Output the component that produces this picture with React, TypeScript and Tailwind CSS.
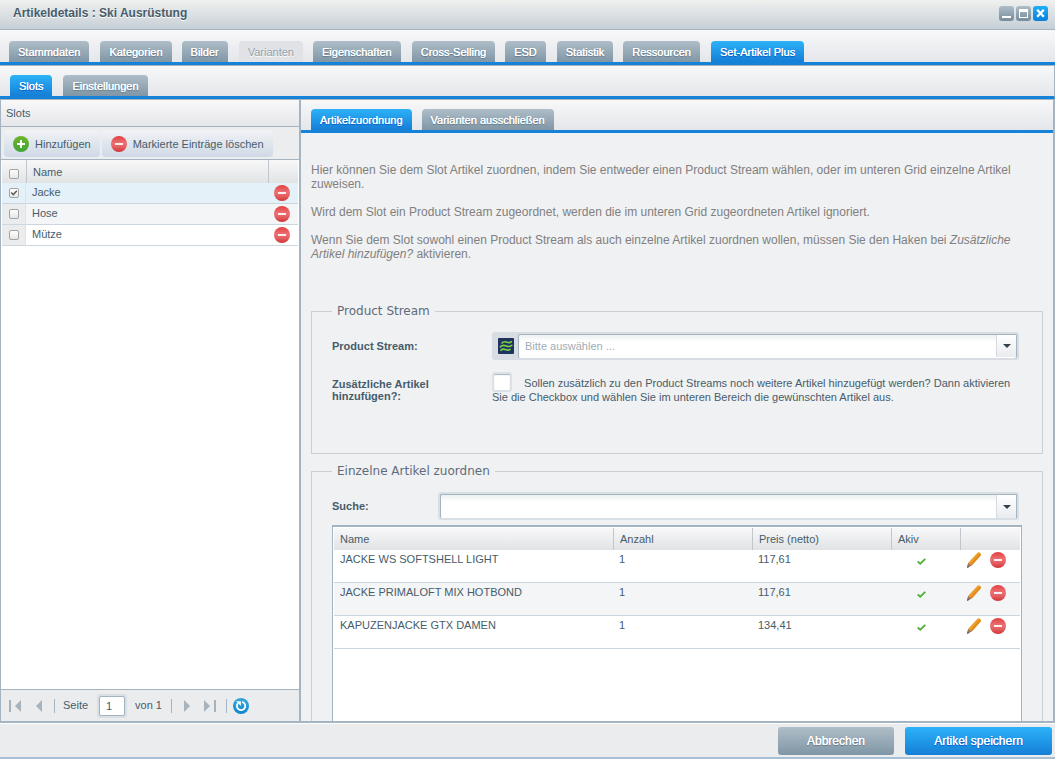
import { useState } from 'react';

type TabItem = { label: string; disabled?: boolean };

const mainTabs: TabItem[] = [
  { label: 'Stammdaten' },
  { label: 'Kategorien' },
  { label: 'Bilder' },
  { label: 'Varianten', disabled: true },
  { label: 'Eigenschaften' },
  { label: 'Cross-Selling' },
  { label: 'ESD' },
  { label: 'Statistik' },
  { label: 'Ressourcen' },
  { label: 'Set-Artikel Plus' },
];

const subTabs: TabItem[] = [{ label: 'Slots' }, { label: 'Einstellungen' }];

const slotTabs: TabItem[] = [{ label: 'Artikelzuordnung' }, { label: 'Varianten ausschließen' }];

const slots = [
  { name: 'Jacke', checked: true },
  { name: 'Hose', checked: false },
  { name: 'Mütze', checked: false },
];

const articles = [
  { name: 'JACKE WS SOFTSHELL LIGHT', amount: '1', price: '117,61' },
  { name: 'JACKE PRIMALOFT MIX HOTBOND', amount: '1', price: '117,61' },
  { name: 'KAPUZENJACKE GTX DAMEN', amount: '1', price: '134,41' },
];

function TabBar({ tabs, initial, className }: { tabs: TabItem[]; initial: string; className: string }) {
  const [active, setActive] = useState(initial);

  const look = (tab: TabItem) => {
    if (tab.disabled) return 'bg-[#e0e2e5] text-[#95a0ab] [text-shadow:0_1px_0_#fff]';
    if (tab.label === active) {
      return 'bg-linear-to-b from-[#2db2f8] to-[#157fd6] text-white [text-shadow:0_0_0_#fff,0_1px_1px_#0b4fc4]';
    }
    return 'bg-linear-to-b from-[#afbec8] to-[#8096a6] text-white [text-shadow:0_0_0_#fff,0_1px_1px_#5c7182]';
  };

  return (
    <div
      role="tablist"
      className={`flex shrink-0 items-end border-b-[3px] border-[#1682d8] bg-linear-to-b from-[#f8f8f9] to-[#e4e6ea] ${className}`}
    >
      {tabs.map((tab) => (
        <button
          key={tab.label}
          type="button"
          role="tab"
          aria-selected={tab.label === active}
          disabled={tab.disabled}
          onClick={() => setActive(tab.label)}
          className={`h-[21px] rounded-t-[4px] px-[9px] text-[11px] leading-[23px] whitespace-nowrap odd:mr-px ${look(tab)}`}
        >
          {tab.label}
        </button>
      ))}
    </div>
  );
}

function MinusIcon() {
  return (
    <svg width="16" height="16" viewBox="0 0 16 16" className="block">
      <defs>
        <linearGradient id="minus" x1="0" y1="0" x2="0" y2="1">
          <stop offset="0" stopColor="#e23f42" />
          <stop offset="0.45" stopColor="#ec7173" />
          <stop offset="0.7" stopColor="#e45d5f" />
          <stop offset="1" stopColor="#cf3438" />
        </linearGradient>
      </defs>
      <circle cx="8" cy="8" r="8" fill="url(#minus)" />
      <rect x="4" y="7" width="8" height="2" fill="#fbeeee" />
    </svg>
  );
}

function PlusIcon() {
  return (
    <svg width="16" height="16" viewBox="0 0 16 16" className="block">
      <defs>
        <linearGradient id="plus" x1="0" y1="0" x2="0" y2="1">
          <stop offset="0" stopColor="#6fb52c" />
          <stop offset="1" stopColor="#3fa535" />
        </linearGradient>
      </defs>
      <circle cx="8" cy="8" r="8" fill="url(#plus)" />
      <path d="M7 4h2v3h3v2H9v3H7V9H4V7h3z" fill="#fff" />
    </svg>
  );
}

function PencilIcon() {
  return (
    <svg width="14" height="16" viewBox="0 0 14 16" className="block">
      <path d="M10 1.3Q11.4-.3 13 .8q1.600 1 .5 2.900L5 13.200 1.200 10.800z" fill="#eda02f" />
      <path d="M11.800 2.200L3.200 12.100 5 13.200l8.500-9.500q.6-1-.1-2z" fill="#e18c20" />
      <path d="M1.200 10.800L5 13.200.3 16q-.5-1.500.9-5.200z" fill="#a3765c" />
      <path d="M.6 13.600l1.500 1.200L.3 16z" fill="#5c4440" />
    </svg>
  );
}

function CheckIcon() {
  return (
    <svg width="9" height="7" viewBox="0 0 9 7" className="block" aria-label="aktiv">
      <path d="M.7 3.500L3.200 5.700 8.300.9" fill="none" stroke="#52b03c" strokeWidth="1.900" />
    </svg>
  );
}

function StreamIcon() {
  return (
    <svg width="16" height="16" viewBox="0 0 16 16" className="block">
      <rect width="16" height="16" rx="1" fill="#1d3461" />
      <g fill="none" stroke="#7dd13f" strokeWidth="1.600" strokeLinecap="round">
        <path d="M4 5C5.500 3.200 7.200 3.600 9 4.300s3.200.5 4.400-.6" />
        <path d="M2.300 8.800C4.200 7 6.300 7.200 8.300 8s3.900.6 5.500-.6" />
        <path d="M3 12.300C4.500 10.600 6.300 11 8 11.700s2.900.5 4-.4" />
      </g>
    </svg>
  );
}

function RefreshIcon() {
  return (
    <svg width="16" height="16" viewBox="0 0 16 16" className="block">
      <defs>
        <linearGradient id="refresh" x1="0" y1="0" x2="0" y2="1">
          <stop offset="0" stopColor="#36a9dd" />
          <stop offset="1" stopColor="#0f86cc" />
        </linearGradient>
      </defs>
      <circle cx="8" cy="8" r="8" fill="url(#refresh)" />
      <path d="M9.200 3.900a4.200 4.200 0 1 1-4.400 1.400" fill="none" stroke="#fff" strokeWidth="1.800" />
      <path d="M3 3.200h4.900v4.700z" fill="#fff" />
    </svg>
  );
}

function ArrowIcon({ bar, flip }: { bar?: boolean; flip?: boolean }) {
  return (
    <svg
      width={bar ? 12 : 6}
      height="12"
      viewBox={bar ? '0 0 12 12' : '6 0 6 12'}
      className={`block ${flip ? '-scale-x-100' : ''}`}
      fill="#a6b3bd"
    >
      {bar && <rect width="2" height="12" />}
      <path d="M12 0v12L6 6z" />
    </svg>
  );
}

function DropArrow() {
  return (
    <svg width="8" height="4" viewBox="0 0 8 4" className="block" fill="#33414c">
      <path d="M0 0h8L4 4z" />
    </svg>
  );
}

function GridCheckbox({ label, checked = false }: { label: string; checked?: boolean }) {
  return (
    <span className="mx-auto grid w-[10px] place-items-center">
      <input
        type="checkbox"
        aria-label={label}
        defaultChecked={checked}
        className="peer col-start-1 row-start-1 block size-[10px] appearance-none rounded-[2px] border border-[#a3a3a3] bg-linear-to-b from-white to-[#e6e6e6]"
      />
      <svg
        width="8"
        height="8"
        viewBox="0 0 8 8"
        className="pointer-events-none invisible col-start-1 row-start-1 peer-checked:visible"
      >
        <path d="M1.300 3.500l2 2.300L6.800 1.800" fill="none" stroke="#555" strokeWidth="1.400" />
      </svg>
    </span>
  );
}

function Separator() {
  return <span className="h-[14px] w-px bg-[#a4b4c0]" />;
}

function SlotPanel() {
  const toolButton =
    'flex h-[27px] items-center gap-1.5 rounded-[4px] bg-linear-to-b from-[#f1f3f5] to-[#cfd9e6] px-[9px] leading-4';
  const cell = 'border-b border-[#ccd6de] p-0 pl-1.5';

  return (
    <section className="flex w-[301px] shrink-0 flex-col border-r-2 border-l border-r-[#a4b4c0] border-l-[#a4b4c0] bg-white">
      <h2 className="h-[27px] shrink-0 border-b border-[#a4b4c0] bg-linear-to-b from-[#f8f8f9] to-[#e6e7ea] pl-[5px] leading-[26px]">
        Slots
      </h2>

      <div className="flex h-[33px] shrink-0 gap-0.5 border-b border-[#a4b4c0] bg-[#ebedef] px-[3px] pt-[3px]">
        <button type="button" className={toolButton}>
          <PlusIcon />
          <span className="pt-px">Hinzufügen</span>
        </button>
        <button type="button" className={toolButton}>
          <MinusIcon />
          <span className="pt-px">Markierte Einträge löschen</span>
        </button>
      </div>

      <div className="flex-1 px-px">
        <table className="w-full table-fixed border-separate border-spacing-0 text-left">
          <colgroup>
            <col className="w-6" />
            <col />
            <col className="w-[30px]" />
          </colgroup>
          <thead>
            <tr className="h-[23px] bg-linear-to-b from-[#f8f8f9] to-[#e1e3e5]">
              <th className="p-0 pt-1 align-middle">
                <GridCheckbox label="Alle auswählen" />
              </th>
              <th className="border-l border-[#c0c6cb] p-0 pt-0.5 pl-1.5 font-normal">Name</th>
              <th className="border-l border-[#c0c6cb] p-0" />
            </tr>
          </thead>
          <tbody>
            {slots.map((slot) => (
              <tr key={slot.name} className="h-[21px] align-top even:bg-[#f4f5f7] has-checked:bg-[#e5f1f9]">
                <td className="border-r border-b border-r-[#dfe2e6] border-b-[#ccd6de] bg-[#ebecee] p-0 align-middle has-checked:bg-[#e5f1f9]">
                  <GridCheckbox label={slot.name} checked={slot.checked} />
                </td>
                <td className={`${cell} leading-[18px]`}>{slot.name}</td>
                <td className={`${cell} pt-0.5`}>
                  <button type="button" aria-label={`${slot.name} löschen`} className="block">
                    <MinusIcon />
                  </button>
                </td>
              </tr>
            ))}
          </tbody>
        </table>
      </div>

      <nav className="flex h-8 shrink-0 items-center border-t border-[#a4b4c0] bg-[#ebecee] pl-2">
        <button type="button" aria-label="Erste Seite">
          <ArrowIcon bar />
        </button>
        <button type="button" aria-label="Vorherige Seite" className="mr-3 ml-[15px]">
          <ArrowIcon />
        </button>
        <Separator />
        <label className="mr-2 ml-2 flex items-center gap-[9px]">
          Seite
          <span className="rounded-[3px] bg-[#d8dfe5] p-0.5">
            <input
              type="text"
              defaultValue="1"
              className="block h-5 w-[26px] rounded-[2px] border border-[#a4b4c0] bg-white pl-1.5 text-[11px]"
            />
          </span>
        </label>
        <span>von 1</span>
        <span className="mr-3 ml-[9px] flex">
          <Separator />
        </span>
        <button type="button" aria-label="Nächste Seite">
          <ArrowIcon flip />
        </button>
        <button type="button" aria-label="Letzte Seite" className="mr-[10px] ml-[14px]">
          <ArrowIcon bar flip />
        </button>
        <Separator />
        <button type="button" aria-label="Aktualisieren" className="ml-1.5">
          <RefreshIcon />
        </button>
      </nav>
    </section>
  );
}

function StreamFieldset() {
  return (
    <fieldset className="h-[151px] shrink-0 border border-[#c9d0d5] px-5">
      <legend className="px-[5px] font-['DejaVu_Sans',sans-serif] text-[12px] leading-4 text-[#5f6b7a]">
        Product Stream
      </legend>

      <div className="mr-[3px] flex items-center pt-[13px]">
        <label htmlFor="stream" className="w-40 shrink-0 font-bold">
          Product Stream:
        </label>
        <div className="flex h-7 min-w-0 flex-1 items-center rounded-[3px] bg-[#d8dde4] p-0.5">
          <span className="mr-1 ml-1">
            <StreamIcon />
          </span>
          <div className="grid h-6 min-w-0 flex-1">
            <select
              id="stream"
              defaultValue=""
              className="col-start-1 row-start-1 h-6 w-full appearance-none rounded-[2px] border-t border-r border-l border-[#a4b4c0] bg-linear-to-b from-[#edf1f2] to-white to-30% pl-1.5 text-[11px] text-[#a0adb8]"
            >
              <option value="">Bitte auswählen ...</option>
            </select>
            <span className="pointer-events-none col-start-1 row-start-1 my-px mr-px grid w-5 place-items-center justify-self-end border-l border-[#d3dae0] bg-linear-to-b from-white to-[#e9ebee]">
              <DropArrow />
            </span>
          </div>
        </div>
      </div>

      <div className="mr-[3px] flex pt-4">
        <label htmlFor="extra" className="w-40 shrink-0 pt-0.5 font-bold leading-3">
          Zusätzliche Artikel
          <br />
          hinzufügen?:
        </label>
        <p className="leading-[14px]">
          <input
            id="extra"
            type="checkbox"
            className="-my-1 mr-[9px] inline-block size-5 appearance-none rounded-[3px] border-2 border-[#dbe1e6] bg-white align-[-1px] inset-shadow-[0_1px_1px_#a4b4c0] checked:bg-[#1682d8]"
          />{' '}
          Sollen zusätzlich zu den Product Streams noch weitere Artikel hinzugefügt werden? Dann aktivieren Sie die
          Checkbox und wählen Sie im unteren Bereich die gewünschten Artikel aus.
        </p>
      </div>
    </fieldset>
  );
}

function ArticleFieldset() {
  const headCell = 'border-l border-[#c0c6cb] p-0 pl-1.5 font-normal';
  const cell = 'border-b border-[#ccd6de] p-0';

  return (
    <fieldset className="mt-[9px] flex min-h-0 flex-1 flex-col border border-b-0 border-[#c9d0d5] px-5">
      <legend className="px-[5px] font-['DejaVu_Sans',sans-serif] text-[12px] leading-4 text-[#5f6b7a]">
        Einzelne Artikel zuordnen
      </legend>

      <div className="mr-[3px] flex items-center pt-[13px]">
        <label htmlFor="search" className="w-[106px] shrink-0 font-bold">
          Suche:
        </label>
        <div className="flex h-7 min-w-0 flex-1 rounded-[3px] bg-[#d8dfe5] p-0.5">
          <input
            id="search"
            type="text"
            className="h-6 min-w-0 flex-1 rounded-l-[2px] border-t border-l border-[#a4b4c0] bg-linear-to-b from-[#edf1f2] to-white to-30% pl-1.5 text-[11px]"
          />
          <button
            type="button"
            aria-label="Artikel anzeigen"
            className="grid w-[21px] place-items-center border-t border-r border-l border-t-[#a4b4c0] border-r-[#a4b4c0] border-l-[#d3dae0] bg-linear-to-b from-white to-[#e9ebee]"
          >
            <DropArrow />
          </button>
        </div>
      </div>

      <div className="mt-[5px] min-h-0 flex-1 overflow-hidden border-t-2 border-r border-l border-[#a4b4c0] bg-white px-px pt-px">
        <table className="w-full table-fixed border-separate border-spacing-0 text-left">
          <colgroup>
            <col />
            <col className="w-[139px]" />
            <col className="w-[139px]" />
            <col className="w-[69px]" />
            <col className="w-[60px]" />
          </colgroup>
          <thead>
            <tr className="h-[22px] bg-linear-to-b from-[#f8f8f9] to-[#e1e3e5]">
              <th className="p-0 pl-1.5 font-normal">Name</th>
              <th className={headCell}>Anzahl</th>
              <th className={headCell}>Preis (netto)</th>
              <th className={headCell}>Akiv</th>
              <th className={headCell} />
            </tr>
          </thead>
          <tbody>
            {articles.map((article) => (
              <tr key={article.name} className="h-[33px] align-top leading-[18px] even:bg-[#f4f5f7]">
                <td className={`${cell} pl-1.5`}>{article.name}</td>
                <td className={`${cell} pl-1.5`}>{article.amount}</td>
                <td className={`${cell} pl-1.5`}>{article.price}</td>
                <td className={`${cell} pt-2 pl-[26px]`}>
                  <CheckIcon />
                </td>
                <td className={`${cell} pt-0.5 pl-[7px]`}>
                  <div className="flex gap-[9px]">
                    <button type="button" aria-label="Bearbeiten">
                      <PencilIcon />
                    </button>
                    <button type="button" aria-label="Löschen">
                      <MinusIcon />
                    </button>
                  </div>
                </td>
              </tr>
            ))}
          </tbody>
        </table>
      </div>
    </fieldset>
  );
}

function App() {
  const windowButton = 'grid size-[15px] place-items-center rounded-[3px]';

  return (
    <div className="flex h-screen flex-col overflow-hidden bg-[#ebecee] font-['Liberation_Sans',Arial,sans-serif] text-[11px] text-[#475c6a]">
      {/* Title bar */}
      <header className="flex h-[30px] shrink-0 items-center justify-between border-b border-[#a4b4c0] bg-linear-to-b from-[#f0f0ef] to-[#c6d0d7] pr-[7px] pb-0.5 pl-[13px]">
        <h1 className="pb-0.5 text-[12px] font-bold [text-shadow:0_1px_0_#fff]">Artikeldetails : Ski Ausrüstung</h1>
        <div className="flex gap-0.5">
          <button type="button" aria-label="Minimieren" className={`${windowButton} bg-linear-to-b from-[#afbec8] to-[#768c9c]`}>
            <svg width="15" height="15" viewBox="0 0 15 15">
              <rect x="3" y="10" width="9" height="2" fill="#fff" />
            </svg>
          </button>
          <button type="button" aria-label="Maximieren" className={`${windowButton} bg-linear-to-b from-[#afbec8] to-[#768c9c]`}>
            <svg width="15" height="15" viewBox="0 0 15 15">
              <path d="M3 3h9v9H3zM4 6v5h7V6z" fill="#fff" fillRule="evenodd" />
            </svg>
          </button>
          <button type="button" aria-label="Schließen" className={`${windowButton} bg-linear-to-b from-[#1fb0fa] to-[#0b7fd9]`}>
            <svg width="15" height="15" viewBox="0 0 15 15">
              <path d="M4.200 3.700l6.600 7M10.800 3.700l-6.600 7" stroke="#fff" strokeWidth="2.300" />
            </svg>
          </button>
        </div>
      </header>

      <TabBar tabs={mainTabs} initial="Set-Artikel Plus" className="h-[35px] gap-[10px] pl-[9px]" />
      <TabBar
        tabs={subTabs}
        initial="Slots"
        className="h-[34px] gap-[10px] border-t border-r border-t-[#a4b4c0] border-r-[#a4b4c0] pl-[10px]"
      />

      <main className="flex min-h-0 flex-1 border-t border-b-2 border-[#a4b4c0]">
        <SlotPanel />

        <section className="flex min-w-0 flex-1 flex-col border-r-2 border-[#a4b4c0] bg-[#f0f1f3]">
          <TabBar tabs={slotTabs} initial="Artikelzuordnung" className="h-[33px] gap-[9px] pl-[10px]" />

          <div className="flex min-h-0 flex-1 flex-col px-[10px] pt-[30px]">
            <div className="mb-[42px] flex flex-col gap-[14px] text-[12px] leading-[14px] text-[#808080]">
              <p>
                Hier können Sie dem Slot Artikel zuordnen, indem Sie entweder einen Product Stream wählen, oder im
                unteren Grid einzelne Artikel zuweisen.
              </p>
              <p>
                Wird dem Slot ein Product Stream zugeordnet, werden die im unteren Grid zugeordneten Artikel ignoriert.
              </p>
              <p>
                Wenn Sie dem Slot sowohl einen Product Stream als auch einzelne Artikel zuordnen wollen, müssen Sie den
                Haken bei <em>Zusätzliche Artikel hinzufügen?</em> aktivieren.
              </p>
            </div>

            <StreamFieldset />
            <ArticleFieldset />
          </div>
        </section>
      </main>

      {/* Action bar */}
      <footer className="flex h-9 shrink-0 justify-end gap-[11px] border-t border-b-2 border-t-white border-b-[#a9c0d4] pt-[3px] pr-[3px]">
        <button
          type="button"
          className="h-7 w-[116px] rounded-[3px] bg-linear-to-b from-[#afbec8] to-[#8096a6] text-[12px] text-white [text-shadow:0_0_0_#fff,0_1px_1px_#5c7182]"
        >
          Abbrechen
        </button>
        <button
          type="button"
          className="h-7 w-[147px] rounded-[3px] bg-linear-to-b from-[#2db2f8] to-[#157fd6] text-[12px] text-white [text-shadow:0_0_0_#fff,0_1px_1px_#0b4fc4]"
        >
          Artikel speichern
        </button>
      </footer>
    </div>
  );
}

export default App;
